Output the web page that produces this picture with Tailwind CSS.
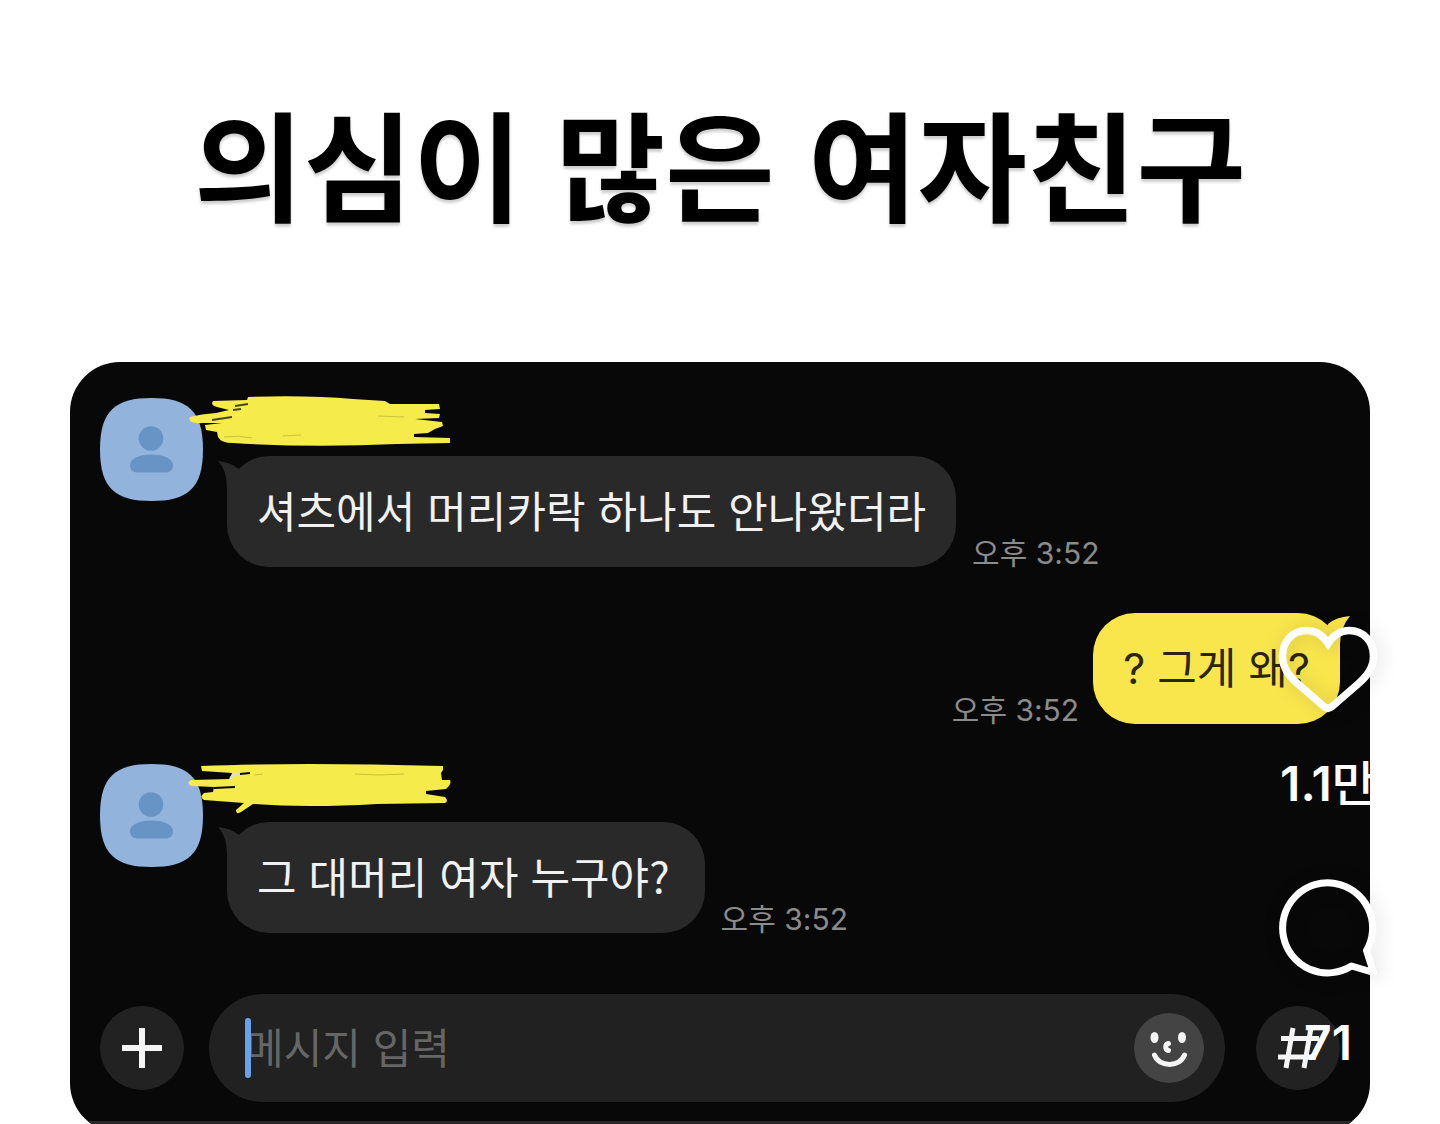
<!DOCTYPE html>
<html lang="ko">
<head>
  <meta charset="UTF-8" />
  <meta name="viewport" content="width=device-width, initial-scale=1.0" />
  <title>의심이 많은 여자친구</title>
  <script src="https://cdn.jsdelivr.net/npm/@tailwindcss/browser@4"></script>
</head>
<body class="relative h-screen overflow-hidden bg-white font-[Inter,'Noto_Sans_CJK_KR',sans-serif]">
  <main class="px-[70px]">
    <h1 class="pt-[101px] pb-[141px] text-center font-['Noto_Sans_CJK_KR',sans-serif] text-[119px] leading-[120px] font-bold text-black whitespace-nowrap text-shadow-[0_3px_3px_rgb(0_0_0/0.2)]">의심이 많은 여자친구</h1>

    <section class="overflow-hidden rounded-[50px] bg-[#080808]">
      <div class="flex flex-col gap-10 px-[30px] pt-9">

        <!-- received -->
        <div class="flex gap-6">
          <svg class="size-[103px] shrink-0" viewBox="0 0 103 103" aria-hidden="true">
            <path d="M51.500 0C87 0 103 12 103 51.500S87 103 51.500 103 0 91 0 51.500 16 0 51.500 0Z" fill="#92b4dc" />
            <circle cx="51" cy="40.500" r="12.300" fill="#6894c5" />
            <path d="M30 67c0-6 9-10.500 21.500-10.500S73 61 73 67c0 5-3 7.500-8 7.500H38c-5 0-8-2.500-8-7.500Z" fill="#6894c5" />
          </svg>
          <div class="relative pt-[58px]">
            <svg class="absolute -top-1 -left-10 h-[54px] w-[264px]" viewBox="0 0 264 54" aria-hidden="true">
              <path d="M3 23Q14 20 29 19L42 16 30 13Q23 11 26 7L60 6 61 3Q120 1 166 5L198 7 203 10H252L253 15 238 16V19L253 20 252 24 228 25 255 28 256 32 248 35 241 39 227 40V43L263 44V49L210 50Q125 54 46 49Q34 49 31 43L30 38 19 36 18 31 35 29 15 29Q0 30 3 23Z" fill="#f5ec4c" />
              <path d="M46 16l8-1M48 12l13-2M25 26l20-3" fill="none" stroke="#4b471a" stroke-width="2" />
              <path d="M37 43q15-2 28 1M96 42l18-1M191 22l26 1" fill="none" stroke="#c9c03e" stroke-width="1" />
            </svg>
            <div class="flex items-end gap-4">
              <div class="relative rounded-[42px] bg-[#292929] pt-[22px] pr-[30px] pb-[26px] pl-[30px] font-['Noto_Sans_CJK_KR',sans-serif] text-[43px] leading-[63px] whitespace-nowrap text-[#f1f1f1]">
                <svg class="absolute top-[5px] -left-[9px] h-[50px] w-[26px]" viewBox="0 0 26 50" aria-hidden="true">
                  <path d="M0 0Q12 1 21 8L26 50H9V28Q9 9 0 0Z" fill="#292929" />
                </svg>
                <span class="relative">셔츠에서 머리카락 하나도 안나왔더라</span>
              </div>
              <time class="text-[30px] leading-[28px] whitespace-nowrap text-[#8b8b8b]">오후 3:52</time>
            </div>
          </div>
        </div>

        <!-- sent -->
        <div class="mt-[6px] flex items-end justify-end gap-[14px]">
          <time class="text-[30px] leading-[28px] whitespace-nowrap text-[#8b8b8b]">오후 3:52</time>
          <div class="relative rounded-[42px] bg-[#f9e54c] px-[30px] py-6 text-[43px] leading-[63px] whitespace-nowrap text-[#2b260b]">
            <svg class="absolute top-[3px] -right-[10px] h-[50px] w-[28px]" viewBox="0 0 28 50" aria-hidden="true">
              <path d="M28 0Q14 1 6 8L0 50H18V28Q18 12 28 0Z" fill="#f9e54c" />
            </svg>
            <span class="relative">? 그게 왜?</span>
          </div>
        </div>

        <!-- received -->
        <div class="flex gap-6">
          <svg class="size-[103px] shrink-0" viewBox="0 0 103 103" aria-hidden="true">
            <path d="M51.500 0C87 0 103 12 103 51.500S87 103 51.500 103 0 91 0 51.500 16 0 51.500 0Z" fill="#92b4dc" />
            <circle cx="51" cy="40.500" r="12.300" fill="#6894c5" />
            <path d="M30 67c0-6 9-10.500 21.500-10.500S73 61 73 67c0 5-3 7.500-8 7.500H38c-5 0-8-2.500-8-7.500Z" fill="#6894c5" />
          </svg>
          <div class="relative pt-[58px]">
            <svg class="absolute -top-1 -left-10 h-[54px] w-[266px]" viewBox="0 0 266 54" aria-hidden="true">
              <path d="M14 6Q110 2 256 6V10L254 13 255 20 263 20Q265 24 259 29L239 31V34L258 37Q262 41 258 43L190 44Q120 48 66 44L54 52Q49 55 49 50L57 43 17 40Q12 37 17 33L26 32 27 27 4 26Q-1 23 4 20L43 19 45 13 15 11Z" fill="#f5ec4c" />
              <path d="M43 20q2-8 11-6" fill="none" stroke="#ddd" stroke-width="2" />
              <path d="M53 14l10-1M27 28l21-1" fill="none" stroke="#080808" stroke-width="2" />
              <path d="M67 15l9-1M168 14l24 1 25-1" fill="none" stroke="#c9c03e" stroke-width="1" />
            </svg>
            <div class="flex items-end gap-4">
              <div class="relative rounded-[42px] bg-[#292929] pt-[22px] pr-[35px] pb-[26px] pl-[30px] font-['Noto_Sans_CJK_KR',sans-serif] text-[43px] leading-[63px] whitespace-nowrap text-[#f1f1f1]">
                <svg class="absolute top-[5px] -left-[9px] h-[50px] w-[26px]" viewBox="0 0 26 50" aria-hidden="true">
                  <path d="M0 0Q12 1 21 8L26 50H9V28Q9 9 0 0Z" fill="#292929" />
                </svg>
                <span class="relative">그 대머리 여자 누구야?</span>
              </div>
              <time class="text-[30px] leading-[28px] whitespace-nowrap text-[#8b8b8b]">오후 3:52</time>
            </div>
          </div>
        </div>
      </div>

      <form class="mt-[61px] flex items-center px-[30px] pb-[19px]">
        <button type="button" aria-label="추가" class="flex size-[84px] shrink-0 items-center justify-center rounded-full bg-[#222]">
          <svg class="size-10" viewBox="0 0 40 40" fill="none" stroke="#f5f5f5" stroke-width="6"><path d="M20 0v40M0 20h40" /></svg>
        </button>
        <div class="relative mr-[31px] ml-[25px] flex h-[108px] min-w-0 flex-1 items-center rounded-full bg-[#212121] pr-[21px] pl-9">
          <span class="absolute left-9 h-[60px] w-[6px] rounded-full bg-[#67a2ea]"></span>
          <input type="text" aria-label="메시지 입력" placeholder="메시지 입력" class="min-w-0 flex-1 bg-transparent text-[42px] leading-[63px] text-white outline-none placeholder:text-[#666]" />
          <button type="button" aria-label="이모티콘" class="flex size-[70px] shrink-0 items-center justify-center rounded-full bg-[#444]">
            <svg class="size-[70px]" viewBox="0 0 70 70" fill="none" stroke="#f5f5f5" stroke-linecap="round">
              <ellipse cx="20.500" cy="24.500" rx="4" ry="5.500" fill="#f5f5f5" stroke="none" />
              <ellipse cx="48" cy="24.500" rx="4" ry="5.500" fill="#f5f5f5" stroke="none" />
              <path d="M34.500 30.500a3.600 3.600 0 0 0 0 7" stroke-width="5" />
              <path d="M20.500 42c5 12.500 25 12.500 30 0" stroke-width="5" />
            </svg>
          </button>
        </div>
        <button type="button" aria-label="샵검색" class="flex size-[84px] shrink-0 items-center justify-center rounded-full bg-[#222]">
          <svg class="size-[42px]" viewBox="0 0 42 42" fill="none" stroke="#f5f5f5" stroke-width="5"><path d="M16 1L9 41M34 1L27 41M4 11.500h38M1 30h38" /></svg>
        </button>
      </form>
      <div class="h-3 bg-[#2a2829]"></div>
    </section>
  </main>

  <!-- action rail over the post -->
  <aside class="absolute top-[622px] right-[47px] flex w-[130px] flex-col items-center text-[48px] leading-[60px] font-semibold text-white">
    <button type="button" aria-label="좋아요" class="mb-[36px]">
      <svg class="h-[96px] w-[110px] overflow-visible drop-shadow-[3px_1px_9px_rgb(0_0_0/0.14)]" viewBox="0 0 110 96" fill="none" stroke="#fff" stroke-width="7.500">
        <path d="M55 21.500C49 12 41 8.500 34 8.500 19 8.500 9.500 20 9.500 34 9.500 46 16 54 25 62L51 84.500Q55 88 59 84.500L85 62C94 54 100.500 46 100.500 34 100.500 20 91 8.500 76 8.500 69 8.500 61 12 55 21.500Z" />
      </svg>
    </button>
    <span class="whitespace-nowrap">1.1<span class="font-medium">만</span></span>
    <button type="button" aria-label="댓글" class="mt-[58px] mb-[31px]">
      <svg class="h-[110px] w-[110px] overflow-visible drop-shadow-[3px_1px_9px_rgb(0_0_0/0.14)]" viewBox="0 0 110 110" fill="none" stroke="#fff" stroke-width="7" stroke-linejoin="round">
        <path d="M93.500 78.500A45 45 0 1 0 78.500 94L100.500 100.500Z" />
      </svg>
    </button>
    <span>71</span>
  </aside>
</body>
</html>
